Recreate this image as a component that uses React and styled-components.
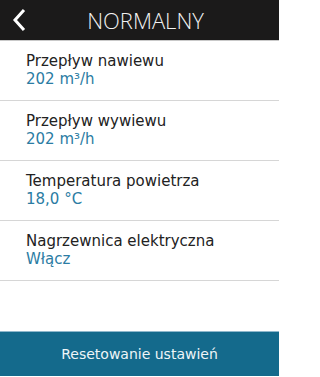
import React from 'react';
import styled, { createGlobalStyle } from 'styled-components';

const GlobalStyle = createGlobalStyle`
  html, body {
    margin: 0;
    padding: 0;
    background: #ffffff;
  }
  body {
    font-family: "DejaVu Sans", Verdana, sans-serif;
  }
`;

const Screen = styled.div`
  width: 279px;
  height: 377px;
  display: flex;
  flex-direction: column;
  background: #ffffff;
  overflow: hidden;
`;

const Header = styled.div`
  height: 40px;
  flex: none;
  display: grid;
  grid-template-columns: 40px 1fr 40px;
  align-items: center;
  background: #1b1a1a;
  border-bottom: 1px solid #c9c9c9;
`;

const Back = styled.button`
  display: flex;
  align-items: center;
  justify-content: flex-start;
  height: 40px;
  padding: 0 0 0 12px;
  border: none;
  background: none;
`;

const Title = styled.h1`
  margin: 0;
  padding-left: 12px;
  text-align: center;
  color: #f2f2f2;
  font-family: "Open Sans", "Liberation Sans", sans-serif;
  font-weight: 300;
  font-size: 22px;
  line-height: 40px;
`;

const List = styled.div`
  flex: 1;
  display: flex;
  flex-direction: column;
`;

const Row = styled.div`
  height: 60px;
  flex: none;
  box-sizing: border-box;
  padding: 11px 0 0 26px;
  border-bottom: 1px solid #d6d6d6;
`;

const Label = styled.div`
  font-size: 15px;
  line-height: 18px;
  color: #222222;
`;

const Value = styled.div`
  font-size: 15px;
  line-height: 18px;
  color: #2b7ca3;
`;

const ResetButton = styled.button`
  height: 45px;
  flex: none;
  margin-bottom: 1px;
  border: none;
  border-top: 1px solid #8fb8cc;
  background: #146a8c;
  color: #eef5f8;
  font-family: "DejaVu Sans", Verdana, sans-serif;
  font-size: 14px;
`;

const items = [
  { label: 'Przepływ nawiewu', value: '202 m³/h' },
  { label: 'Przepływ wywiewu', value: '202 m³/h' },
  { label: 'Temperatura powietrza', value: '18,0 °C' },
  { label: 'Nagrzewnica elektryczna', value: 'Włącz' },
];

export default function App() {
  return (
    <Screen>
      <GlobalStyle />
      <Header>
        <Back aria-label="Wstecz">
          <svg width="14" height="24" viewBox="0 0 14 24">
            <path d="M12 2 L3 12 L12 22" fill="none" stroke="#ffffff" strokeWidth="3" />
          </svg>
        </Back>
        <Title>NORMALNY</Title>
        <span />
      </Header>
      <List>
        {items.map(item => (
          <Row key={item.label}>
            <Label>{item.label}</Label>
            <Value>{item.value}</Value>
          </Row>
        ))}
      </List>
      <ResetButton>Resetowanie ustawień</ResetButton>
    </Screen>
  );
}
